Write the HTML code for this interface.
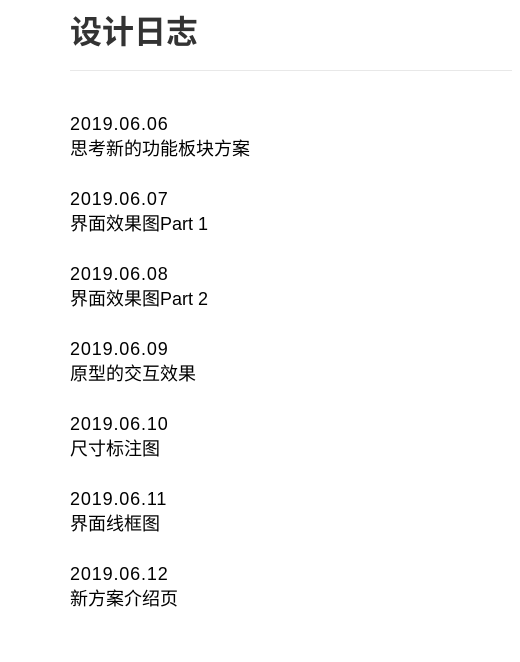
<!DOCTYPE html>
<html><head><meta charset="utf-8"><style>
body{margin:0;background:#fff;width:520px;height:662px;overflow:hidden;font-family:"Liberation Sans","Noto Sans CJK SC",sans-serif;}
h1{position:absolute;left:70px;top:10px;margin:0;font-size:32px;line-height:44px;color:#333;font-weight:bold;}
.hr{position:absolute;left:70px;top:70px;width:442px;height:1px;background:#e8e8e8;}
.item{position:absolute;left:70px;font-size:18px;line-height:25px;color:#000;}
.d{letter-spacing:0.85px;}
</style></head><body>
<h1>设计日志</h1>
<div class="hr"></div>
<div class="item" style="top:112px"><span class="d">2019.06.06</span><br>思考新的功能板块方案</div>
<div class="item" style="top:187px"><span class="d">2019.06.07</span><br>界面效果图Part 1</div>
<div class="item" style="top:262px"><span class="d">2019.06.08</span><br>界面效果图Part 2</div>
<div class="item" style="top:337px"><span class="d">2019.06.09</span><br>原型的交互效果</div>
<div class="item" style="top:412px"><span class="d">2019.06.10</span><br>尺寸标注图</div>
<div class="item" style="top:487px"><span class="d">2019.06.11</span><br>界面线框图</div>
<div class="item" style="top:562px"><span class="d">2019.06.12</span><br>新方案介绍页</div>
</body></html>
